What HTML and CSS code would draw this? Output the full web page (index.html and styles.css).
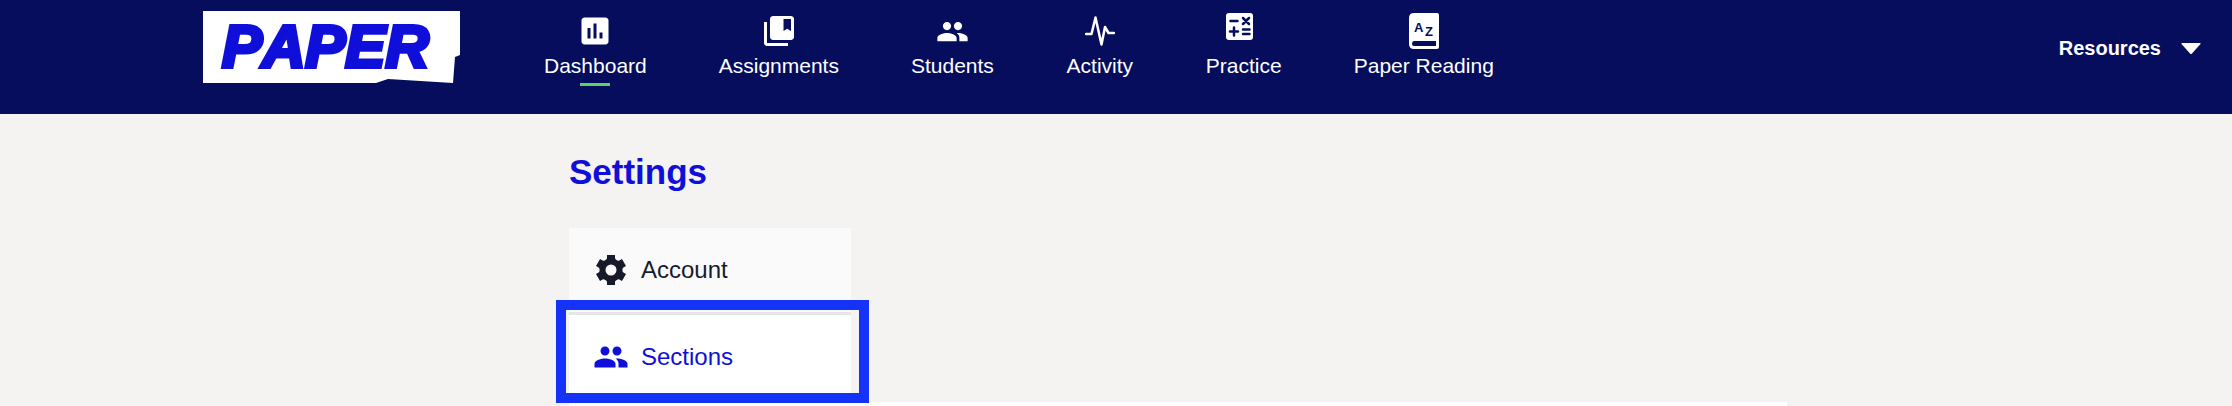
FILE: index.html
```html
<!DOCTYPE html>
<html lang="en">
<head>
<meta charset="utf-8">
<title>Settings</title>
<link rel="stylesheet" href="styles.css">
</head>
<body>
<header class="topbar">
  <a class="logo" href="#" aria-label="PAPER">
    <svg width="258" height="73" viewBox="0 0 258 73">
      <path fill="#fff" d="M0 0H257V44L252 46L250 72L185 68L173 72H0Z"/>
      <text class="logo-text" x="19" y="56">PAPER</text>
    </svg>
  </a>
  <nav class="nav">
    <a class="nav-item active" href="#">
      <span class="nav-icon"><svg width="36" height="36" viewBox="0 0 24 24"><path fill="currentColor" d="M19 3H5c-1.100 0-2 .9-2 2v14c0 1.100.9 2 2 2h14c1.100 0 2-.9 2-2V5c0-1.100-.9-2-2-2zM9 17H7v-7h2v7zm4 0h-2V7h2v10zm4 0h-2v-4h2v4z"/></svg></span>
      <span>Dashboard</span>
    </a>
    <a class="nav-item" href="#">
      <span class="nav-icon"><svg width="36" height="36" viewBox="0 0 24 24"><path fill="currentColor" d="M4 6H2v14c0 1.100.9 2 2 2h14v-2H4V6zM20 2H8c-1.100 0-2 .9-2 2v12c0 1.100.9 2 2 2h12c1.100 0 2-.9 2-2V4c0-1.100-.9-2-2-2zm0 10l-2.500-1.500L15 12V4h5v8z"/></svg></span>
      <span>Assignments</span>
    </a>
    <a class="nav-item" href="#">
      <span class="nav-icon"><svg width="33" height="33" viewBox="0 0 24 24"><path fill="currentColor" d="M16 11c1.660 0 2.990-1.340 2.990-3S17.660 5 16 5s-3 1.340-3 3 1.340 3 3 3zm-8 0c1.660 0 2.990-1.340 2.990-3S9.660 5 8 5 5 6.340 5 8s1.340 3 3 3zm0 2c-2.330 0-7 1.170-7 3.500V19h14v-2.500c0-2.330-4.670-3.500-7-3.500zm8 0c-.29 0-.62.020-.97.050 1.160.84 1.970 1.970 1.970 3.450V19h6v-2.500c0-2.330-4.670-3.500-7-3.500z"/></svg></span>
      <span>Students</span>
    </a>
    <a class="nav-item" href="#">
      <span class="nav-icon"><svg width="30" height="30" viewBox="0 0 30 30"><path fill="none" stroke="currentColor" stroke-width="2.500" stroke-linecap="round" stroke-linejoin="round" d="M1 18H6.500L10.500 1.500L16.500 28.500L20 11L23.500 17H29"/></svg></span>
      <span>Activity</span>
    </a>
    <a class="nav-item" href="#">
      <span class="nav-icon raised"><svg width="36" height="27" viewBox="0 0 36 27"><rect width="27" height="27" rx="3" fill="currentColor"/><path class="cut" d="M4.500 8H11.500M17 5L23 11M23 5L17 11M4 18.500H12M8 14.500V22.500M17 16.500H23.500M17 21H23.500"/></svg></span>
      <span>Practice</span>
    </a>
    <a class="nav-item" href="#">
      <span class="nav-icon raised"><svg width="30" height="36" viewBox="0 0 30 36"><path fill="currentColor" d="M5 0H28Q30 0 30 2V34Q30 36 28 36H5Q0 36 0 31V5Q0 0 5 0Z"/><path fill="#050d5c" d="M5 28H27V33H5Q3 33 3 30.500Q3 28 5 28Z"/><text class="book-text" x="5" y="19">A</text><text class="book-text" x="16" y="23">Z</text></svg></span>
      <span>Paper Reading</span>
    </a>
  </nav>
  <button class="resources" type="button">Resources
    <svg width="20" height="11" viewBox="0 0 20 11"><path fill="currentColor" d="M1 0H19Q20 0 19.500 1L11 10.500Q10 11.500 9 10.500L.5 1Q0 0 1 0Z"/></svg>
  </button>
</header>
<main class="page">
  <h1 class="title">Settings</h1>
  <nav class="menu">
    <a class="menu-item" href="#">
      <svg width="36" height="36" viewBox="-18 -18 36 36">
        <circle r="8.500" fill="none" stroke="currentColor" stroke-width="6"/>
        <g fill="currentColor">
          <path id="tooth" d="M-5 -9L-4 -12V-15H4V-12L5 -9Z"/>
          <use href="#tooth" transform="rotate(60)"/>
          <use href="#tooth" transform="rotate(120)"/>
          <use href="#tooth" transform="rotate(180)"/>
          <use href="#tooth" transform="rotate(240)"/>
          <use href="#tooth" transform="rotate(300)"/>
        </g>
      </svg>
      Account
    </a>
    <a class="menu-item selected" href="#">
      <svg width="36" height="36" viewBox="0 0 24 24"><path fill="currentColor" d="M16 11c1.660 0 2.990-1.340 2.990-3S17.660 5 16 5s-3 1.340-3 3 1.340 3 3 3zm-8 0c1.660 0 2.990-1.340 2.990-3S9.660 5 8 5 5 6.340 5 8s1.340 3 3 3zm0 2c-2.330 0-7 1.170-7 3.500V19h14v-2.500c0-2.330-4.670-3.500-7-3.500zm8 0c-.29 0-.62.020-.97.050 1.160.84 1.970 1.970 1.970 3.450V19h6v-2.500c0-2.330-4.670-3.500-7-3.500z"/></svg>
      Sections
    </a>
  </nav>
  <section class="panel"></section>
</main>
</body>
</html>
```
FILE: styles.css
```css
* { box-sizing: border-box; }
body {
  margin: 0;
  background: #f4f3f1;
  font-family: "Liberation Sans", Arial, sans-serif;
}
a { color: inherit; text-decoration: none; }
svg { display: block; flex: none; }
.topbar {
  display: flex;
  align-items: flex-start;
  height: 114px;
  padding: 11px 31px 0 203px;
  background: #050d5c;
  color: #fff;
}
.logo-text {
  font: italic 700 60px "Liberation Sans", Arial, sans-serif;
  font-kerning: none;
  fill: #0f0fd9;
  stroke: #0f0fd9;
  stroke-width: 4px;
}
.nav {
  display: flex;
  gap: 72px;
  margin-left: 83px;
}
.nav-item {
  display: flex;
  flex-direction: column;
  align-items: center;
  min-width: 68px;
  font-size: 21px;
  line-height: 24px;
  white-space: nowrap;
}
.nav-icon {
  display: flex;
  align-items: center;
  height: 40px;
  margin-bottom: 3px;
}
.nav-icon.raised { align-items: flex-start; padding-top: 2px; }
.nav-item.active::after {
  content: "";
  width: 30px;
  height: 3px;
  margin-top: 5px;
  background: #5fd068;
}
.cut {
  fill: none;
  stroke: #050d5c;
  stroke-width: 2.5;
  stroke-linecap: round;
}
.book-text {
  font: 700 13px "Liberation Sans", Arial, sans-serif;
  fill: #050d5c;
}
.resources {
  display: flex;
  align-items: center;
  gap: 20px;
  margin: 25px 0 0 auto;
  padding: 0;
  border: 0;
  background: none;
  color: inherit;
  font: bold 20px/24px "Liberation Sans", Arial, sans-serif;
}
.page { padding: 38px 445px 0 569px; }
.title {
  margin: 0 0 36px;
  color: #0f0fd9;
  font-size: 35px;
  line-height: 40px;
}
.menu { width: 282px; }
.menu-item {
  display: flex;
  align-items: center;
  gap: 12px;
  height: 84px;
  padding-left: 24px;
  background: #fafafa;
  color: #171a2b;
  font-size: 24px;
}
.menu-item.selected {
  position: relative;
  height: 90px;
  padding-bottom: 3px;
  border-top: 3px solid #e6e6e6;
  background: #fff;
  color: #0f0fd9;
}
.menu-item.selected::after {
  content: "";
  position: absolute;
  inset: -15px -18px -1px -13px;
  border: 10px solid #1532f8;
}
.panel {
  height: 4px;
  background: #fff;
}
```
